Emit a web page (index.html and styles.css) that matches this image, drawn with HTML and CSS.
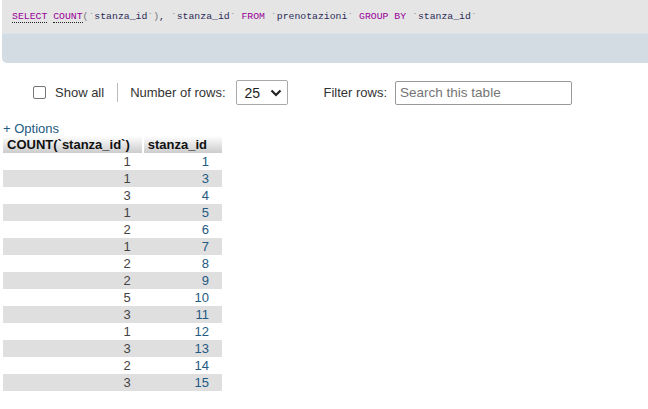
FILE: index.html
```html
<!DOCTYPE html>
<html>
<head>
<meta charset="utf-8">
<link rel="stylesheet" href="styles.css">
</head>
<body>
<div class="sqlpanel">
  <div class="sqlcode"><span class="kw dotted">SELECT</span> <span class="kw dotted">COUNT</span><span class="pn">(</span><span class="pn">`</span><span class="id">stanza_id</span><span class="pn">`</span><span class="pn">)</span><span class="id">,</span> <span class="pn">`</span><span class="id">stanza_id</span><span class="pn">`</span> <span class="kw">FROM</span> <span class="pn">`</span><span class="id">prenotazioni</span><span class="pn">`</span> <span class="kw">GROUP BY</span> <span class="pn">`</span><span class="id">stanza_id</span><span class="pn">`</span></div>
  <div class="sqlfoot"></div>
</div>

<div class="controls">
  <span class="checkbox"></span>
  <span class="label show">Show all</span>
  <span class="sep"></span>
  <span class="label">Number of rows:</span>
  <div class="select"><span>25</span>
    <svg width="12" height="8" viewBox="0 0 12 8"><path d="M1.5 1.5 L6 6 L10.5 1.5" fill="none" stroke="#222" stroke-width="2.2"/></svg>
  </div>
  <span class="label filter">Filter rows:</span>
  <div class="input">Search this table</div>
</div>

<div class="options">+ Options</div>
<table class="results">
  <thead>
    <tr><th>COUNT(`stanza_id`)</th><th>stanza_id</th></tr>
  </thead>
  <tbody>
    <tr><td>1</td><td class="v">1</td></tr>
    <tr><td>1</td><td class="v">3</td></tr>
    <tr><td>3</td><td class="v">4</td></tr>
    <tr><td>1</td><td class="v">5</td></tr>
    <tr><td>2</td><td class="v">6</td></tr>
    <tr><td>1</td><td class="v">7</td></tr>
    <tr><td>2</td><td class="v">8</td></tr>
    <tr><td>2</td><td class="v">9</td></tr>
    <tr><td>5</td><td class="v">10</td></tr>
    <tr><td>3</td><td class="v">11</td></tr>
    <tr><td>1</td><td class="v">12</td></tr>
    <tr><td>3</td><td class="v">13</td></tr>
    <tr><td>2</td><td class="v">14</td></tr>
    <tr><td>3</td><td class="v">15</td></tr>
  </tbody>
</table>
</body>
</html>
```

FILE: styles.css
```css
html, body {
  margin: 0;
  padding: 0;
  background: #fff;
  font-family: "Liberation Sans", Arial, sans-serif;
  font-size: 13px;
  color: #444;
}

.sqlpanel {
  margin-left: 2px;
  border-bottom-left-radius: 5px;
  overflow: hidden;
}

.sqlcode {
  background: #e5e5e5;
  height: 33px;
  box-sizing: border-box;
  padding: 10px 0 0 10px;
  font-family: "Liberation Mono", "DejaVu Sans Mono", monospace;
  font-size: 9.8px;
  line-height: 13px;
  white-space: pre;
  color: #333;
}

.kw { color: #990099; }
.dotted { border-bottom: 1px dotted #222; }
.pn { color: #777; }
.id { color: #2b2b55; }

.sqlfoot {
  background: #d3dce3;
  height: 30px;
  border-top: 1px solid #dbe2e8;
  box-sizing: border-box;
}

.controls {
  display: flex;
  align-items: center;
  margin-top: 17px;
  padding-left: 33px;
  height: 25px;
}

.checkbox {
  width: 13px;
  height: 13px;
  box-sizing: border-box;
  border: 1px solid #767676;
  border-radius: 2px;
  background: #fff;
}

.label {
  color: #333;
  font-size: 13px;
}

.show { margin-left: 9px; }

.sep {
  width: 1px;
  height: 19px;
  background: #bbb;
  margin: 0 12px 0 13px;
}

.select {
  margin-left: 10px;
  width: 52px;
  height: 25px;
  box-sizing: border-box;
  border: 1px solid #aaa;
  border-radius: 2px;
  display: flex;
  align-items: center;
  justify-content: space-between;
  padding: 0 5px 0 8px;
  font-size: 14px;
  color: #222;
}

.filter { margin-left: 36px; }

.input {
  margin-left: 8px;
  width: 177px;
  height: 24px;
  box-sizing: border-box;
  border: 1px solid #999;
  border-radius: 2px;
  padding-left: 4px;
  line-height: 22px;
  color: #757575;
  font-size: 13.5px;
}

.options {
  margin-top: 16px;
  padding-left: 3px;
  line-height: 15px;
  color: #235a81;
}

.results {
  margin-left: 3px;
  border-collapse: collapse;
  border-spacing: 0;
}

.results th {
  background: linear-gradient(#ffffff, #cccccc);
  font-weight: bold;
  color: #111;
  text-align: left;
  height: 17px;
  line-height: 17px;
  padding: 0 12px 0 4px;
  border-right: 2px solid #fff;
}

.results th:last-child {
  border-right: 0;
  padding-right: 15px;
}

.results td {
  height: 17px;
  line-height: 17px;
  padding: 0 12px 0 4px;
  text-align: right;
  color: #444;
}

.results td.v {
  color: #235a81;
  padding-right: 13px;
}

.results tbody tr:nth-child(even) td {
  background: #dfdfdf;
}
```
